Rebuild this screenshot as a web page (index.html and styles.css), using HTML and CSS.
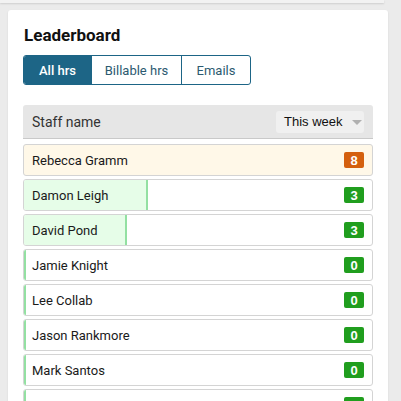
FILE: index.html
```html
<!DOCTYPE html>
<html>
<head>
<meta charset="utf-8">
<link rel="stylesheet" href="styles.css">
</head>
<body>
<div class="prev-card"></div>
<div class="card">
  <h2 class="title">Leaderboard</h2>
  <div class="tabs">
    <div class="tab active">All hrs</div>
    <div class="tab">Billable hrs</div>
    <div class="tab">Emails</div>
  </div>
  <div class="head">
    <span class="head-label">Staff name</span>
    <div class="select"><span class="select-text">This week</span><span class="caret"></span></div>
  </div>
  <div class="rows">
    <div class="row top"><span class="name">Rebecca Gramm</span><span class="badge orange">8</span></div>
    <div class="row"><div class="bar" style="width:35%"></div><span class="name">Damon Leigh</span><span class="badge">3</span></div>
    <div class="row"><div class="bar" style="width:29%"></div><span class="name">David Pond</span><span class="badge">3</span></div>
    <div class="row"><div class="bar" style="width:0%"></div><span class="name">Jamie Knight</span><span class="badge">0</span></div>
    <div class="row"><div class="bar" style="width:0%"></div><span class="name">Lee Collab</span><span class="badge">0</span></div>
    <div class="row"><div class="bar" style="width:0%"></div><span class="name">Jason Rankmore</span><span class="badge">0</span></div>
    <div class="row"><div class="bar" style="width:0%"></div><span class="name">Mark Santos</span><span class="badge">0</span></div>
    <div class="row"><div class="bar" style="width:0%"></div><span class="name"></span><span class="badge">0</span></div>
  </div>
</div>
</body>
</html>
```
FILE: styles.css
```css
html, body {
  margin: 0;
  padding: 0;
  background: #ebebeb;
  font-family: Roboto, "Liberation Sans", sans-serif;
  overflow: hidden;
  height: 401px;
}
.prev-card {
  height: 3px;
  width: 384px;
  background: #f2f2f2;
  box-shadow: 0 1px 2px rgba(0,0,0,0.12);
}
.card {
  margin: 7px 0 0 8px;
  width: 350px;
  padding: 15px;
  background: #fff;
  border-radius: 3px;
  box-shadow: 0 1px 2px rgba(0,0,0,0.1);
  height: 376px;
  box-sizing: content-box;
  overflow: hidden;
}
.title {
  margin: 0;
  font-size: 17px;
  line-height: 20px;
  font-weight: 700;
  color: #111;
  padding-left: 1px;
}
.tabs {
  margin-top: 10px;
  display: flex;
  width: 228px;
  height: 30px;
  border: 1px solid #1d6586;
  border-radius: 3px;
  box-sizing: border-box;
  overflow: hidden;
}
.tab {
  display: flex;
  align-items: center;
  justify-content: center;
  font-size: 13px;
  color: #2c5a70;
  border-left: 1px solid #1d6586;
}
.tab:nth-child(1) { width: 67px; border-left: none; }
.tab:nth-child(2) { width: 89px; }
.tab:nth-child(3) { flex: 1; }
.tab.active {
  background: #1d6586;
  color: #fff;
  font-weight: 500;
}
.head {
  margin-top: 20px;
  height: 33px;
  background: #e6e6e6;
  border-bottom: 1px solid #c9c9c9;
  border-radius: 3px 3px 0 0;
  display: flex;
  align-items: center;
  justify-content: space-between;
  padding: 0 9px;
}
.head-label {
  font-size: 14px;
  color: #333;
}
.select {
  height: 22px;
  width: 88px;
  box-sizing: border-box;
  background: #f0f0f0;
  border-radius: 3px;
  font-family: "Liberation Sans", Arial, sans-serif;
  font-size: 13px;
  color: #111;
  display: flex;
  align-items: center;
  padding-left: 8px;
  gap: 9px;
  white-space: nowrap;
}
.caret {
  width: 0;
  height: 0;
  border-left: 5px solid transparent;
  border-right: 5px solid transparent;
  border-top: 5px solid #b0b0b0;
  margin-top: 1px;
}
.rows {
  margin-top: 5px;
  display: flex;
  flex-direction: column;
  gap: 3px;
}
.row {
  position: relative;
  height: 32px;
  box-sizing: border-box;
  border: 1px solid #d4d4d4;
  border-radius: 3px;
  display: flex;
  align-items: center;
  justify-content: space-between;
  padding: 0 8px 0 8px;
  overflow: hidden;
  background: #fff;
  flex-shrink: 0;
}
.row.top { background: #fff8e8; }
.bar {
  position: absolute;
  left: 0;
  top: 0;
  bottom: 0;
  background: #e6fde8;
  border-right: 2px solid #93e0a2;
}
.name {
  position: relative;
  font-size: 13px;
  color: #1a1a1a;
}
.badge {
  position: relative;
  width: 20px;
  height: 16px;
  border-radius: 2px;
  background: #209e1e;
  color: #fff;
  font-family: "Liberation Sans", Arial, sans-serif;
  font-weight: 700;
  font-size: 13px;
  display: flex;
  align-items: center;
  justify-content: center;
}
.badge.orange { background: #d4600e; }
```
